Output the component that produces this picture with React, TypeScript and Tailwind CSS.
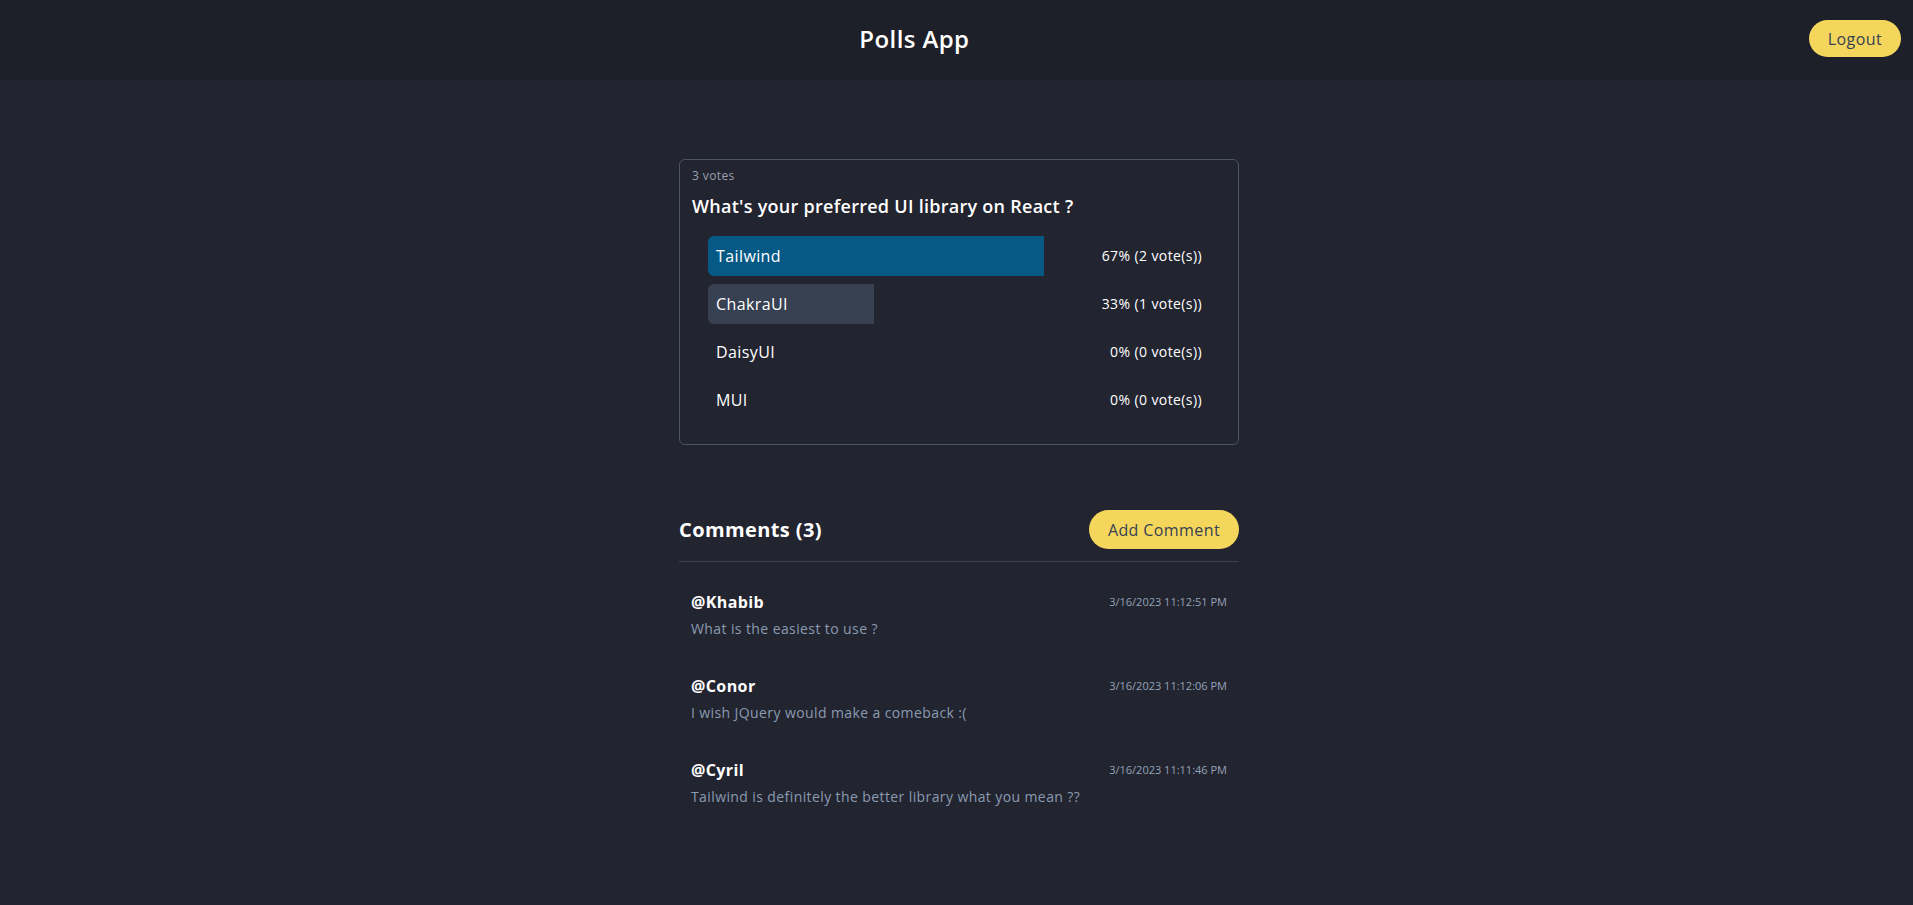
import React from "react";

type Option = { label: string; votes: number; color: string };

const options: Option[] = [
  { label: "Tailwind", votes: 2, color: "bg-[#075985]" },
  { label: "ChakraUI", votes: 1, color: "bg-[#374151]" },
  { label: "DaisyUI", votes: 0, color: "bg-[#374151]" },
  { label: "MUI", votes: 0, color: "bg-[#374151]" },
];

const comments = [
  { user: "Khabib", date: "3/16/2023 11:12:51 PM", text: "What is the easiest to use ?" },
  { user: "Conor", date: "3/16/2023 11:12:06 PM", text: "I wish JQuery would make a comeback :(" },
  { user: "Cyril", date: "3/16/2023 11:11:46 PM", text: "Tailwind is definitely the better library what you mean ??" },
];

const totalVotes = options.reduce((sum, o) => sum + o.votes, 0);

const App = () => {
  return (
    <div className="min-h-screen bg-[#222430] text-white font-['Open_Sans',sans-serif] tracking-wide">
      <header className="flex h-20 items-center bg-[#1e2029] pl-5 pr-3">
        <h1 className="flex-1 pb-[2px] text-center text-2xl font-semibold">Polls App</h1>
        <button className="mb-[3px] h-[37px] rounded-full bg-[#f5d65c] px-[19px] text-base text-gray-700">
          Logout
        </button>
      </header>

      <main className="flex justify-center pl-[5px] pt-[79px] pb-20">
        <div className="w-[560px]">
          <div className="rounded-md border border-[#4b5563] px-3 pt-2 pb-6">
            <p className="text-xs text-gray-400">{totalVotes} votes</p>
            <h2 className="mt-2 text-lg font-semibold tracking-[0.015em]">
              What's your preferred UI library on React ?
            </h2>
            <div className="mx-4 mt-4 flex flex-col gap-2">
              {options.map((o) => {
                const pct = totalVotes ? Math.round((o.votes / totalVotes) * 100) : 0;
                return (
                  <div key={o.label} className="relative flex h-10 items-center justify-between pl-2 pr-2">
                    {pct > 0 && (
                      <div
                        className={`absolute left-0 top-0 h-full rounded-l-md ${o.color}`}
                        style={{ width: `${pct}%` }}
                      />
                    )}
                    <span className="relative text-base">{o.label}</span>
                    <span className="relative text-sm">
                      {pct}% ({o.votes} vote(s))
                    </span>
                  </div>
                );
              })}
            </div>
          </div>

          <div className="mt-[65px] flex items-center justify-between border-b border-[#3d4250] pb-3">
            <h3 className="text-xl font-bold">Comments ({comments.length})</h3>
            <button className="h-[39px] rounded-full bg-[#f5d65c] px-[19px] text-base text-gray-700">
              Add Comment
            </button>
          </div>

          <ul className="flex flex-col gap-[35px] px-3 pt-[28px]">
            {comments.map((c) => (
              <li key={c.user}>
                <div className="flex items-center justify-between">
                  <span className="text-base font-bold">@{c.user}</span>
                  <span className="text-[11px] tracking-normal text-[#94a3b8]">{c.date}</span>
                </div>
                <p className="mt-[5px] text-sm text-[#8a9bb0]">{c.text}</p>
              </li>
            ))}
          </ul>
        </div>
      </main>
    </div>
  );
};

export default App;
